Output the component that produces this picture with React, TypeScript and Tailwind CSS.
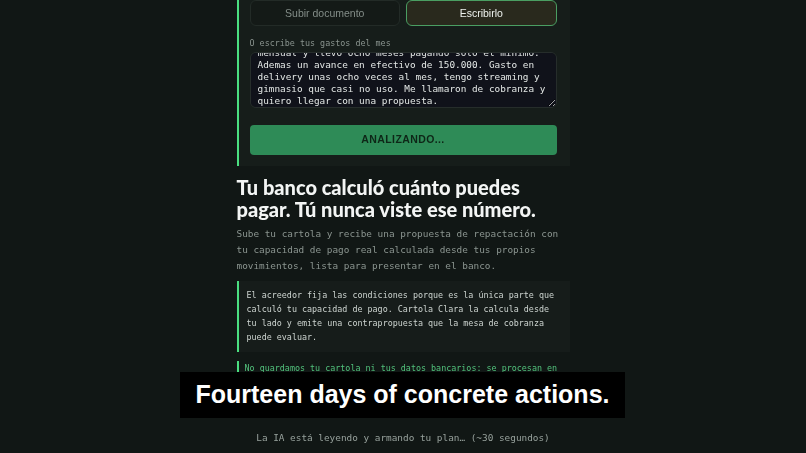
import { useEffect, useRef } from "react";

const mono = "font-['DejaVu_Sans_Mono',monospace]";

const gastos =
  "Gano 950.000 líquidos al mes. Tengo la tarjeta de crédito con 1.800.000 de deuda y un pago mínimo mensual y llevo ocho meses pagando solo el minimo. Ademas un avance en efectivo de 150.000. Gasto en delivery unas ocho veces al mes, tengo streaming y gimnasio que casi no uso. Me llamaron de cobranza y quiero llegar con una propuesta.";

function InputCard() {
  const ref = useRef<HTMLTextAreaElement>(null);
  // the screenshot is taken with the text scrolled to the end
  useEffect(() => {
    if (ref.current) ref.current.scrollTop = ref.current.scrollHeight;
  }, []);

  return (
    <section className="border-l-2 border-[#4ade80] bg-[#161d1a] pb-[11px] pl-[11px] pr-[13px]">
      <div className="grid grid-cols-2 gap-[6px]">
        <button className="h-[26px] rounded-md border border-[#232b27] bg-[#141a17] pt-[2px] font-['Liberation_Sans',Arial,sans-serif] text-[10.5px] text-[#838d88]">
          Subir documento
        </button>
        <button className="h-[26px] rounded-md border border-[#4a9e62] bg-[#29291d] pt-[2px] font-['Liberation_Sans',Arial,sans-serif] text-[10.5px] text-[#eef2ee]">
          Escribirlo
        </button>
      </div>
      <label className={`${mono} mt-[11px] block text-[8.4px] leading-[12px] text-[#89938e]`}>O escribe tus gastos del mes</label>
      <textarea
        ref={ref}
        readOnly
        value={gastos}
        className={`${mono} mt-[3px] block h-[56px] w-full resize-y rounded-md border border-[#262d2b] bg-[#10121a] pb-0 pl-[7px] pr-[4px] pt-[2px] text-[9.4px] leading-[12px] text-[#e4e8e6] outline-none [scrollbar-width:none]`}
      />
      <button className="mt-[17px] h-[30px] w-full rounded-[4px] bg-[#2e8b57] font-['Liberation_Sans',Arial,sans-serif] text-[10.5px] font-bold tracking-[0.4px] text-[#0e2617]">
        ANALIZANDO...
      </button>
    </section>
  );
}

export default function App() {
  return (
    <main className="relative h-[453px] overflow-hidden bg-[#111715]">
      <div className="mx-auto w-[333px]">
        <InputCard />

        <h1 className="mt-[10px] font-['Lato',sans-serif] text-[20px] font-black leading-[22px] text-[#f3f5f4]">
          Tu banco calculó cuánto puedes pagar. Tú nunca viste ese número.
        </h1>
        <p className={`${mono} mt-[6px] text-[9.4px] leading-[16px] text-[#8b9590]`}>
          Sube tu cartola y recibe una propuesta de repactación con tu capacidad de pago real calculada desde tus propios
          movimientos, lista para presentar en el banco.
        </p>

        <blockquote
          className={`${mono} mt-[7px] border-l-2 border-[#4ade80] bg-[#161c1a] pb-[8px] pl-[8px] pr-[8px] pt-[7px] text-[8.4px] leading-[14px] text-[#cdd4d0]`}
        >
          El acreedor fija las condiciones porque es la única parte que calculó tu capacidad de pago. Cartola Clara la
          calcula desde tu lado y emite una contrapropuesta que la mesa de cobranza puede evaluar.
        </blockquote>

        <p className={`${mono} mt-[9px] border-l-2 border-[#4ade80] pl-[6px] text-[8.4px] leading-[14px] text-[#52c27c]`}>
          No guardamos tu cartola ni tus datos bancarios: se procesan en memoria y se descartan al terminar el análisis.
        </p>

        <p className={`${mono} mt-[41px] text-center text-[9.4px] leading-[16px] text-[#97a19c]`}>
          La IA está leyendo y armando tu plan… (~30 segundos)
        </p>
      </div>

      {/* burned-in subtitle over the page */}
      <div className="absolute left-[180px] top-[372px] flex h-[46px] w-[445px] items-center justify-center bg-black">
        <span className="font-['Liberation_Sans',Arial,sans-serif] text-[25px] font-bold text-white">
          Fourteen days of concrete actions.
        </span>
      </div>
    </main>
  );
}
